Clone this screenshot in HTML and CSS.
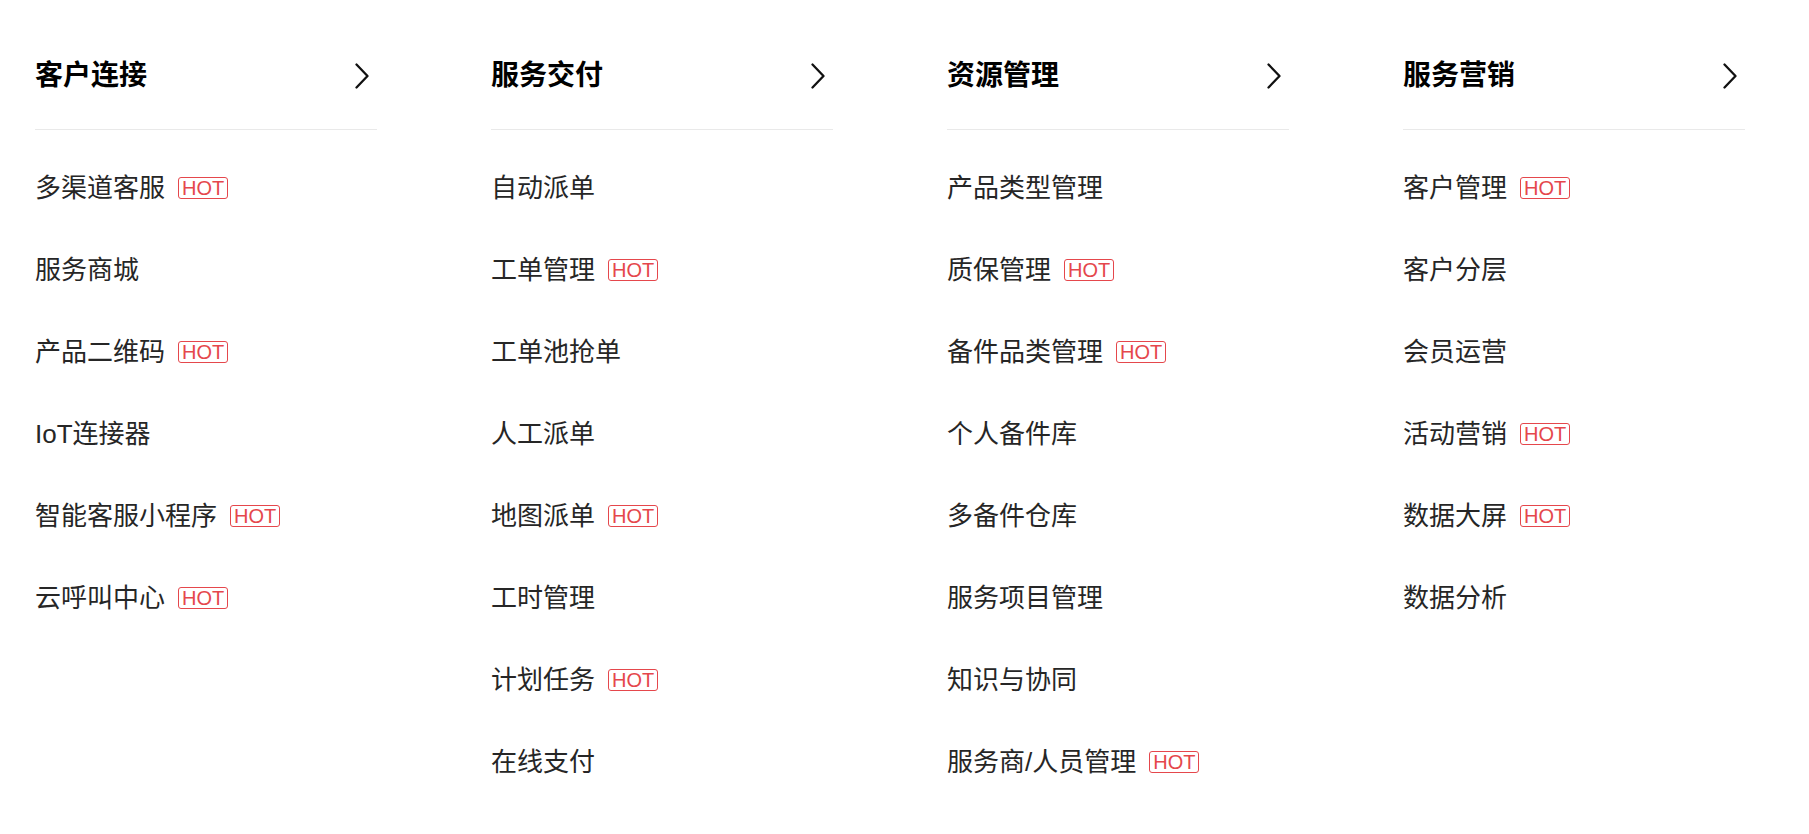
FILE: index.html
```html
<!DOCTYPE html>
<html lang="zh-CN">
<head>
<meta charset="utf-8">
<title>产品菜单</title>
<link rel="stylesheet" href="styles.css">
</head>
<body>
<div class="menu">
  <section class="col">
    <div class="col-head">
      <h2 class="col-title">客户连接</h2>
      <svg class="chev" width="14" height="26" viewBox="0 0 14 26"><polyline points="1.5,1.5 12.5,13 1.5,24.5" fill="none" stroke="#111" stroke-width="2.3" stroke-linecap="round" stroke-linejoin="round"/></svg>
    </div>
    <ul class="list">
      <li class="item">多渠道客服<span class="hot">HOT</span></li>
      <li class="item">服务商城</li>
      <li class="item">产品二维码<span class="hot">HOT</span></li>
      <li class="item">IoT连接器</li>
      <li class="item">智能客服小程序<span class="hot">HOT</span></li>
      <li class="item">云呼叫中心<span class="hot">HOT</span></li>
    </ul>
  </section>
  <section class="col">
    <div class="col-head">
      <h2 class="col-title">服务交付</h2>
      <svg class="chev" width="14" height="26" viewBox="0 0 14 26"><polyline points="1.5,1.5 12.5,13 1.5,24.5" fill="none" stroke="#111" stroke-width="2.3" stroke-linecap="round" stroke-linejoin="round"/></svg>
    </div>
    <ul class="list">
      <li class="item">自动派单</li>
      <li class="item">工单管理<span class="hot">HOT</span></li>
      <li class="item">工单池抢单</li>
      <li class="item">人工派单</li>
      <li class="item">地图派单<span class="hot">HOT</span></li>
      <li class="item">工时管理</li>
      <li class="item">计划任务<span class="hot">HOT</span></li>
      <li class="item">在线支付</li>
    </ul>
  </section>
  <section class="col">
    <div class="col-head">
      <h2 class="col-title">资源管理</h2>
      <svg class="chev" width="14" height="26" viewBox="0 0 14 26"><polyline points="1.5,1.5 12.5,13 1.5,24.5" fill="none" stroke="#111" stroke-width="2.3" stroke-linecap="round" stroke-linejoin="round"/></svg>
    </div>
    <ul class="list">
      <li class="item">产品类型管理</li>
      <li class="item">质保管理<span class="hot">HOT</span></li>
      <li class="item">备件品类管理<span class="hot">HOT</span></li>
      <li class="item">个人备件库</li>
      <li class="item">多备件仓库</li>
      <li class="item">服务项目管理</li>
      <li class="item">知识与协同</li>
      <li class="item">服务商/人员管理<span class="hot">HOT</span></li>
    </ul>
  </section>
  <section class="col">
    <div class="col-head">
      <h2 class="col-title">服务营销</h2>
      <svg class="chev" width="14" height="26" viewBox="0 0 14 26"><polyline points="1.5,1.5 12.5,13 1.5,24.5" fill="none" stroke="#111" stroke-width="2.3" stroke-linecap="round" stroke-linejoin="round"/></svg>
    </div>
    <ul class="list">
      <li class="item">客户管理<span class="hot">HOT</span></li>
      <li class="item">客户分层</li>
      <li class="item">会员运营</li>
      <li class="item">活动营销<span class="hot">HOT</span></li>
      <li class="item">数据大屏<span class="hot">HOT</span></li>
      <li class="item">数据分析</li>
    </ul>
  </section>
</div>
</body>
</html>
```

FILE: styles.css
```css
html, body {
  margin: 0;
  padding: 0;
  background: #ffffff;
}

body {
  font-family: "Liberation Sans", "Noto Sans CJK SC", sans-serif;
  color: #262626;
}

.menu {
  display: flex;
  gap: 114px;
  padding: 56px 0 0 35px;
}

.col {
  width: 342px;
  flex: 0 0 342px;
}

.col-head {
  display: flex;
  align-items: center;
  justify-content: space-between;
  height: 40px;
  padding-bottom: 33px;
  border-bottom: 1px solid #e9e9e9;
}

.col-title {
  margin: 0;
  font-size: 28px;
  line-height: 40px;
  font-weight: 700;
  color: #000;
}

.chev {
  display: block;
  margin-right: 8px;
}

.list {
  list-style: none;
  margin: 0;
  padding: 14px 0 0 0;
}

.item {
  display: flex;
  align-items: center;
  height: 82px;
  font-size: 26px;
  color: #262626;
  white-space: nowrap;
}

.hot {
  display: inline-block;
  margin: 5px 0 0 13px;
  height: 20px;
  padding: 0 3px;
  border: 1px solid #e5474c;
  border-radius: 3px;
  color: #e5474c;
  font-family: "Liberation Sans", sans-serif;
  font-size: 20px;
  line-height: 21px;
}
```
